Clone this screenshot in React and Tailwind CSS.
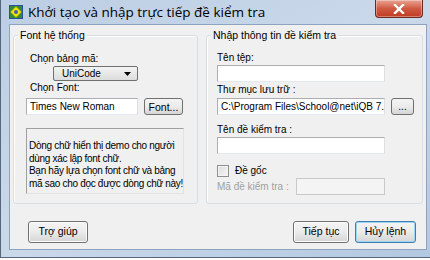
import React from 'react';

const body = { fontFamily: '"Liberation Sans", Arial, sans-serif' };

function Btn({ children, w, primary }) {
    return (
        <div
            className={`h-[22px] flex items-center justify-center rounded-[3px] border text-[10.5px] text-black bg-gradient-to-b from-[#f4f4f4] via-[#ebebeb] to-[#d5d5d5] ${primary ? 'border-[#3c7fb1] shadow-[inset_0_0_0_1px_#9fd5f4]' : 'border-[#707070] shadow-[inset_0_0_0_1px_#fcfcfc]'}`}
            style={{ width: w }}
        >
            {children}
        </div>
    );
}

function Input({ w, children, disabled }) {
    return (
        <div
            className={`h-[17px] px-[3px] border text-[10px] leading-[15px] overflow-hidden whitespace-pre ${disabled ? 'bg-[#f4f4f4] border-[#c9c9c9]' : 'bg-white border-[#abadb3] border-r-[#dbdfe6] border-b-[#e3e9ef]'}`}
            style={{ width: w }}
        >
            {children}
        </div>
    );
}

function Group({ title, w, children }) {
    return (
        <div className="h-[169px] mt-[10px] border border-[#d5dfe5] rounded-[3px] shadow-[inset_1px_1px_0_#ffffff]" style={{ width: w }}>
            <div className="w-fit -mt-[8px] ml-[4px] px-[2px] bg-[#f0f0f0] text-[10.5px] leading-[14px] text-black">{title}</div>
            {children}
        </div>
    );
}

function AppIcon() {
    return (
        <svg width="14" height="14" viewBox="0 0 14 14">
            <rect x="0.5" y="0.5" width="13" height="13" fill="#2f8a3c" stroke="#2a4f9a" />
            <path d="M7 1.5 L12.5 7 L7 12.5 L1.5 7 Z" fill="#f5e400" stroke="#b59a00" strokeWidth="0.6" />
            <circle cx="7" cy="7" r="2" fill="#3b5fc0" />
        </svg>
    );
}

export default function App() {
    return (
        <div className="w-[430px] h-[260px] bg-white overflow-hidden" style={body}>
            <div className="w-[430px] h-[258px] flex flex-col pl-[8px] pr-[3px] pb-[7px] border-l border-b border-[#56667c] bg-gradient-to-br from-[#bccee4] via-[#cad9ea] to-[#b3c8e1]">
                <div className="h-[24px] flex items-start shrink-0">
                    <div className="mt-[5px]"><AppIcon /></div>
                    <div className="ml-[5px] mt-[3px] text-[13.5px] leading-[18px] text-black" style={{ fontFamily: '"Open Sans", "Noto Sans", sans-serif' }}>
                        Khởi tạo và nhập trực tiếp đề kiểm tra
                    </div>
                    <div className="ml-auto mr-[4px] w-[48px] h-[18px] rounded-b-[4px] border border-t-0 border-[#6b2a22] bg-gradient-to-b from-[#e8a493] via-[#cf5a43] to-[#c13a22] flex items-center justify-center shadow-[inset_0_0_0_1px_rgba(255,255,255,0.35)]">
                        <svg width="12" height="10" viewBox="0 0 12 10">
                            <path d="M2 1 L10 9 M10 1 L2 9" stroke="#fff" strokeWidth="2.4" strokeLinecap="square" />
                        </svg>
                    </div>
                </div>

                <div className="flex-1 bg-[#f0f0f0] border border-[#8ea3bd] flex flex-col">
                    <div className="flex pl-[3px] gap-[8px]">
                        <Group title="Font hệ thống" w={185}>
                            <div className="pl-[12px] text-[10px] leading-[14px] whitespace-nowrap">
                                <div className="mt-[10px] ml-[4px]">Chọn bảng mã:</div>
                                <div className="ml-[27px] w-[85px] h-[15px] rounded-[2px] border border-[#707070] bg-gradient-to-b from-[#f3f3f3] to-[#dcdcdc] flex items-center justify-between pl-[8px] pr-[6px]">
                                    <span>UniCode</span>
                                    <svg width="7" height="4" viewBox="0 0 7 4"><path d="M0 0 H7 L3.5 4 Z" fill="#000" /></svg>
                                </div>
                                <div className="mt-0 ml-[4px]">Chọn Font:</div>
                                <div className="mt-[3px] flex gap-[6px]">
                                    <Input w={112}>Times New Roman</Input>
                                    <div className="h-[17px] w-[39px] flex items-center justify-center rounded-[3px] border border-[#707070] bg-gradient-to-b from-[#f4f4f4] via-[#ebebeb] to-[#d5d5d5] text-[10.5px]">Font...</div>
                                </div>
                                <div className="mt-[13px] w-[158px] h-[66px] border border-[#a0a0a0] border-r-[#e3e3e3] border-b-[#e3e3e3] pl-[2px] pt-[11px] text-[10px] leading-[12.5px] tracking-[-0.3px]">
                                    Dòng chữ hiển thị demo cho người<br />
                                    dùng xác lập font chữ.<br />
                                    Bạn hãy lựa chọn font chữ và bảng<br />
                                    mã sao cho đọc được dòng chữ này!
                                </div>
                            </div>
                        </Group>
                        <Group title="Nhập thông tin đề kiểm tra" w={217}>
                            <div className="pl-[10px] text-[10px] leading-[14px] whitespace-nowrap">
                                <div className="mt-[9px]">Tên tệp:</div>
                                <Input w={168} />
                                <div className="mt-[1px]">Thư mục lưu trữ :</div>
                                <div className="mt-[1px] flex gap-[6px]">
                                    <Input w={168}>C:\Program Files\School@net\iQB 7.0\iQ</Input>
                                    <div className="h-[17px] w-[23px] flex items-center justify-center rounded-[3px] border border-[#707070] bg-gradient-to-b from-[#f4f4f4] via-[#ebebeb] to-[#d5d5d5] leading-[10px]">...</div>
                                </div>
                                <div className="mt-[8px]">Tên đề kiểm tra :</div>
                                <Input w={168} />
                                <div className="mt-[10px] flex items-center gap-[6px] h-[14px]">
                                    <div className="w-[12px] h-[12px] border border-[#8e8f8f] bg-gradient-to-br from-[#dcdcdc] to-[#f6f6f6] shadow-[inset_0_0_0_1px_#f4f4f4]" />
                                    <span>Đề gốc</span>
                                </div>
                                <div className="flex items-center">
                                    <span className="w-[79px] text-[#a0a0a0]">Mã đề kiểm tra :</span>
                                    <Input w={89} disabled />
                                </div>
                            </div>
                        </Group>
                    </div>
                    <div className="mt-[17px] flex items-center pl-[18px] pr-[10px]">
                        <Btn w={60}>Trợ giúp</Btn>
                        <div className="ml-auto flex gap-[6px]">
                            <Btn w={56}>Tiếp tục</Btn>
                            <Btn w={61} primary>Hủy lệnh</Btn>
                        </div>
                    </div>
                </div>
            </div>
        </div>
    );
}
